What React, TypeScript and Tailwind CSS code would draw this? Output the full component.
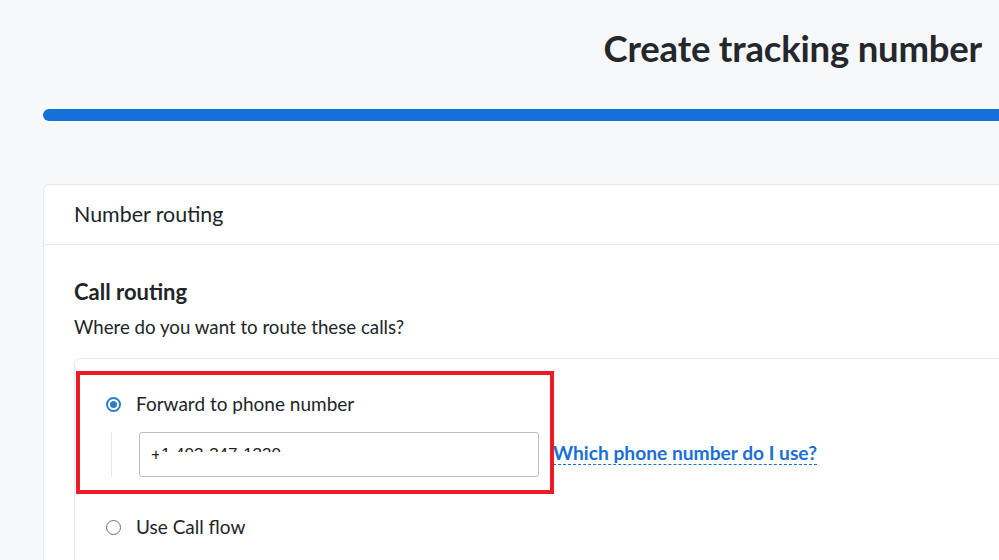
import React from "react";

function Radio({ checked }: { checked?: boolean }) {
  return checked ? (
    <span className="flex h-[15px] w-[15px] items-center justify-center rounded-full border-2 border-[#2b7dca] bg-white">
      <span className="h-[7px] w-[7px] rounded-full bg-[#2b7dca]" />
    </span>
  ) : (
    <span className="h-[15px] w-[15px] rounded-full border-[1.5px] border-[#707070] bg-white" />
  );
}

export default function App() {
  return (
    <div
      className="relative h-[560px] w-[999px] overflow-hidden bg-[#f7f8fa] text-[#212529]"
      style={{ fontFamily: "Lato, 'Noto Sans', sans-serif" }}
    >
      <div className="flex h-[98px] items-center justify-end pr-[17px] pb-[2px]">
        <h1 className="text-[36.5px] font-bold leading-none tracking-[-0.2px] text-[#24282d]">Create tracking number</h1>
      </div>
      <div className="mt-[11px] ml-[43px] h-[12px] rounded-l-full bg-[#1570d8]" />
      <div className="mt-[63px] ml-[43px] rounded-tl-md border border-r-0 border-[#e4e7ec] bg-white">
        <div className="flex h-[60px] items-center border-b border-[#e4e7ec] pl-[30px] text-[21.4px]">
          Number routing
        </div>
        <div className="pl-[30px] pt-[33px]">
          <div className="text-[22px] font-bold leading-[28px]">Call routing</div>
          <div className="mt-[9px] text-[18.7px] leading-[24px]">Where do you want to route these calls?</div>
          <div className="mt-[19px] rounded-tl-md border border-r-0 border-b-0 border-[#e4e7ec] pl-[31px] pt-[33px]">
            <div className="flex items-center gap-[15px]">
              <Radio checked />
              <span className="text-[19px] leading-[24px]">Forward to phone number</span>
            </div>
            <div className="mt-[16px] ml-[5px] flex items-center border-l border-[#e4e7ec] pl-[27px]">
              <div className="relative flex h-[45px] w-[400px] items-center rounded-[3px] border border-[#b8bec7] pl-[11px]">
                <span style={{ fontFamily: "'Liberation Sans', Arial, sans-serif" }} className="text-[17px] text-[#222]">
                  +1 403-347-1330
                </span>
                <div className="absolute left-[19px] top-[19px] h-[20px] w-[170px] bg-white" />
              </div>
              <a className="mb-[3px] ml-[14px] border-b border-dashed border-[#1a6fd6] text-[19.2px] font-bold leading-[22px] text-[#1a6fd6]">
                Which phone number do I use?
              </a>
            </div>
            <div className="mt-[38px] flex items-center gap-[15px]">
              <Radio />
              <span className="text-[19px] leading-[24px]">Use Call flow</span>
            </div>
            <div className="h-[40px]" />
          </div>
        </div>
      </div>
      <div className="pointer-events-none absolute left-[76px] top-[371px] h-[123px] w-[478px] border-[4px] border-[#ed1c24]" />
    </div>
  );
}
